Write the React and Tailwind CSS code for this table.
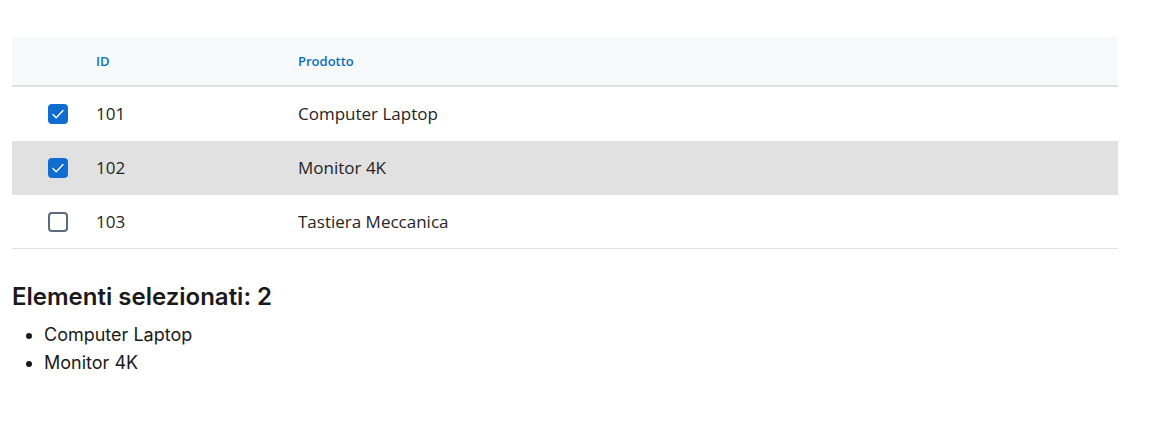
import React, { useState } from "react";

const products = [
  { id: 101, name: "Computer Laptop" },
  { id: 102, name: "Monitor 4K" },
  { id: 103, name: "Tastiera Meccanica" },
];

const CheckBox = ({ checked, onClick }) => (
  <button
    onClick={onClick}
    className={
      checked
        ? "w-5 h-5 rounded-[4px] bg-[#0f6cd0] flex items-center justify-center"
        : "w-5 h-5 rounded-[4px] border-2 border-[#5b6b7c] bg-white"
    }
  >
    {checked && (
      <svg viewBox="0 0 20 20" className="w-5 h-5">
        <path
          d="M5 10.5l3.2 3.2L15 6.5"
          fill="none"
          stroke="white"
          strokeWidth="1.4"
          strokeLinecap="round"
          strokeLinejoin="round"
        />
      </svg>
    )}
  </button>
);

export default function App() {
  const [selected, setSelected] = useState([101, 102]);

  const toggle = (id) =>
    setSelected((prev) =>
      prev.includes(id) ? prev.filter((x) => x !== id) : [...prev, id]
    );

  const selectedItems = products.filter((p) => selected.includes(p.id));

  return (
    <div className="bg-white min-h-[432px] pt-[37px] px-3">
      {/* Table */}
      <div className="w-[1106px] font-['Open_Sans','Noto_Sans',sans-serif]">
        <div className="h-[50px] pt-[2px] bg-[#f7f8f9] border-b-2 border-[#e0e1e3] flex items-center text-[13px] font-semibold text-[#0f6cbd]">
          <div className="w-[84px]" />
          <div className="w-[202px]">ID</div>
          <div>Prodotto</div>
        </div>
        {products.map((p) => {
          const isSel = selected.includes(p.id);
          const highlight = p.id === 102;
          return (
            <div
              key={p.id}
              className={
                "h-[54px] flex items-center text-[17px] text-[#242424] " +
                (highlight ? "bg-[#e1e1e1]" : "bg-white") +
                (p.id === 103 ? " border-b border-[#e1e1e1]" : "")
              }
            >
              <div className="w-[84px] pl-9 flex items-center">
                <CheckBox checked={isSel} onClick={() => toggle(p.id)} />
              </div>
              <div className="w-[202px]">{p.id}</div>
              <div>{p.name}</div>
            </div>
          );
        })}
      </div>

      {/* Selection summary */}
      <div className="font-['Inter',sans-serif] text-[#1a1a1a]">
        <h3 className="text-[24px] font-semibold mt-[32px] leading-[32px]">
          Elementi selezionati: {selectedItems.length}
        </h3>
        <ul className="list-disc pl-8 mt-[8px] text-[18px] leading-[28px]">
          {selectedItems.map((p) => (
            <li key={p.id}>{p.name}</li>
          ))}
        </ul>
      </div>
    </div>
  );
}
